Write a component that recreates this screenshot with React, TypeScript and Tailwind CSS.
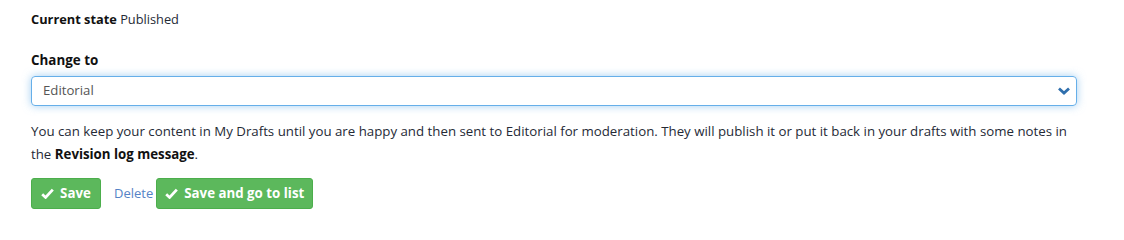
import React from "react";

function Check() {
  return (
    <svg width="13" height="11" viewBox="0 0 13 11" aria-hidden="true">
      <path d="M1.2 6.2 L4.6 9.4 L11.8 1.6" fill="none" stroke="currentColor" strokeWidth="2.8" strokeLinejoin="miter" />
    </svg>
  );
}

export default function App() {
  return (
    <div className="w-[1124px] h-[228px] bg-white pl-[31px] pt-[10px] font-['Open_Sans',sans-serif] text-[#252a36]">
      <div className="text-[12.8px] leading-[18px]">
        <span className="font-bold text-[#111]">Current state</span> Published
      </div>
      <div className="mt-[23px] text-[13.4px] leading-[18px] font-bold text-[#111]">Change to</div>
      <div className="mt-[7px] w-[1046px] h-[30px] rounded-[4px] border border-[#66afe9] shadow-[0_0_8px_rgba(102,175,233,0.6)] flex items-center justify-between pl-[11px] pr-[5px]">
        <span className="text-[13.2px] text-[#555]">Editorial</span>
        <svg width="14" height="10" viewBox="0 0 14 10" className="text-[#2f6fad]" aria-hidden="true">
          <path d="M2 2.5 L7 7 L12 2.5" fill="none" stroke="currentColor" strokeWidth="2.8" />
        </svg>
      </div>
      <p className="mt-[14px] w-[1046px] text-[13.27px] leading-[23px]">
        You can keep your content in My Drafts until you are happy and then sent to Editorial for moderation. They will publish it or put it back in your drafts with some notes in the{" "}
        <span className="font-bold text-[#111]">Revision log message</span>.
      </p>
      <div className="mt-[12px] flex items-center">
        <button className="h-[31px] w-[70px] rounded-[3px] bg-[#5cb85c] border border-[#4cae4c] text-white text-[13.3px] font-bold flex items-center justify-center gap-[6px]">
          <Check />
          Save
        </button>
        <a className="ml-[13px] mr-[3px] text-[13px] text-[#5583c6]">Delete</a>
        <button className="h-[31px] w-[157px] rounded-[3px] bg-[#5cb85c] border border-[#4cae4c] text-white text-[13.3px] font-bold flex items-center justify-center gap-[6px]">
          <Check />
          Save and go to list
        </button>
      </div>
    </div>
  );
}
